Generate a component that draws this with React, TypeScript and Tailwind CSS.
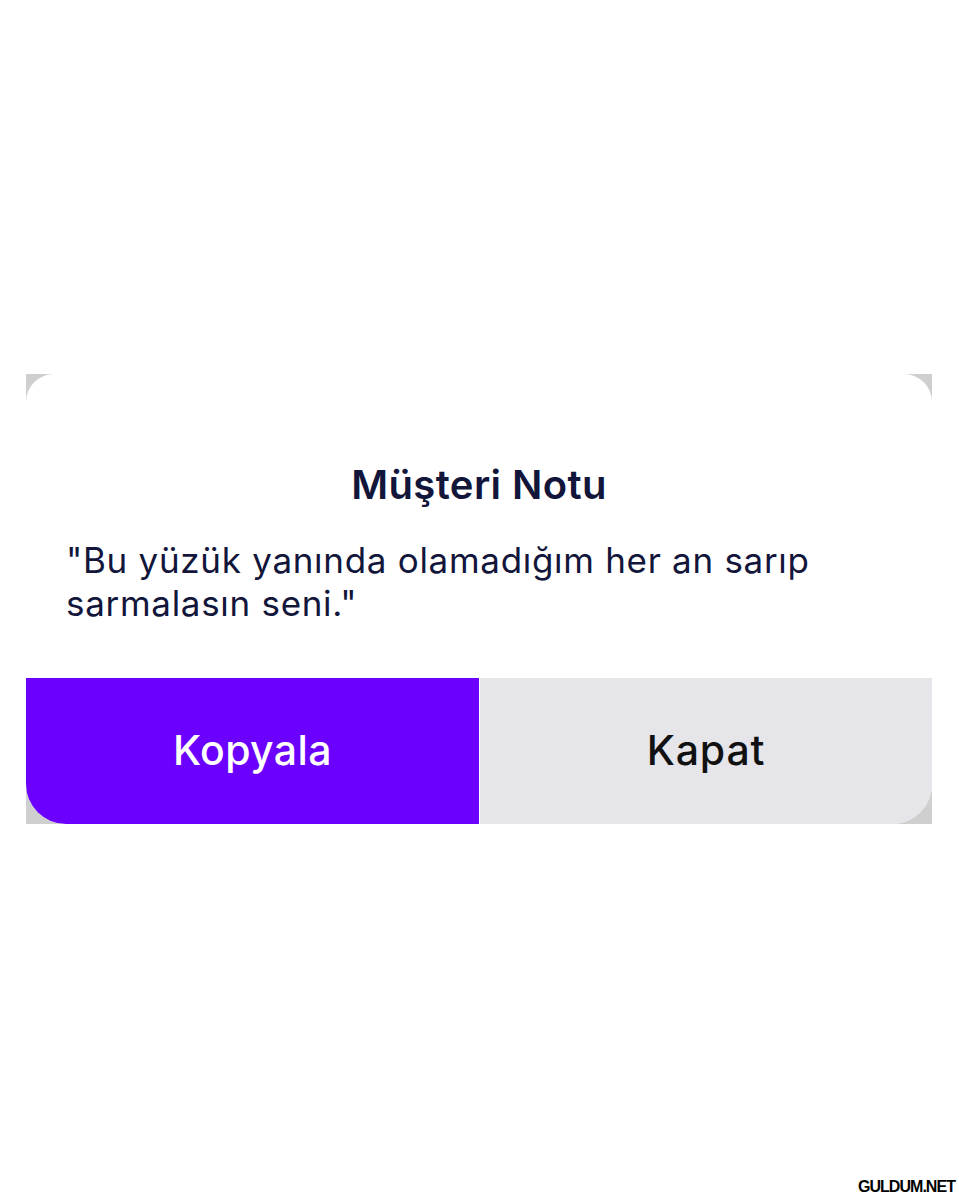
export default function App() {
  return (
    <div className="relative flex h-[1200px] w-[959px] flex-col bg-white font-['Inter',sans-serif]">
      <div className="mx-[26px] mt-[374px] w-[906px] bg-[#cfcfcf]">
        <div className="overflow-hidden rounded-t-[28px] rounded-b-[40px] bg-white">
          <div className="flex h-[304px] flex-col px-[40px] pt-[88px]">
            <h2 className="text-center text-[40px] leading-[46px] font-semibold tracking-[0.01em] text-[#12163a]">
              Müşteri Notu
            </h2>
            <p className="mt-[31px] max-w-[780px] text-[35px] leading-[43px] font-normal tracking-[0.02em] text-[#12163a]">
              "Bu yüzük yanında olamadığım her an sarıp sarmalasın seni."
            </p>
          </div>
          <div className="flex h-[146px]">
            <button className="flex w-[453px] items-center justify-center bg-[#6b00ff] text-[41px] font-medium tracking-[0.01em] text-white">
              Kopyala
            </button>
            <button className="flex flex-1 items-center justify-center border-l border-white bg-[#e5e5ea] text-[41px] font-medium tracking-[0.02em] text-[#111]">
              Kapat
            </button>
          </div>
        </div>
      </div>
      <div className="mt-auto mr-[4px] mb-[3px] self-end font-['Liberation_Sans',sans-serif] text-[16px] leading-[20px] font-black tracking-[-0.06em] text-black [text-shadow:0_0_2px_white]">
        GULDUM.NET
      </div>
    </div>
  );
}
